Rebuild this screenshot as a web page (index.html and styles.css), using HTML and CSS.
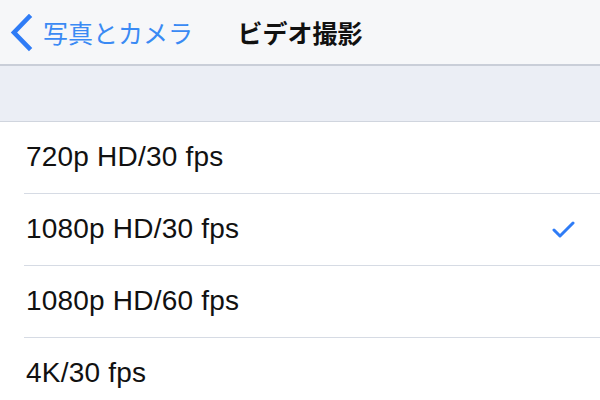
FILE: index.html
```html
<!DOCTYPE html>
<html lang="ja">
<head>
<meta charset="utf-8">
<link rel="stylesheet" href="styles.css">
</head>
<body>
<div class="screen">
  <header class="nav">
    <div class="back">
      <svg class="chev" width="24" height="38" viewBox="0 0 24 38"><path d="M19 3 L4 18.5 L19 34" fill="none" stroke="#2f7cf6" stroke-width="4.6" stroke-linecap="square" stroke-linejoin="miter"/></svg>
      <span class="back-label">写真とカメラ</span>
    </div>
    <div class="title">ビデオ撮影</div>
    <div></div>
  </header>
  <div class="band"></div>
  <ul class="list">
    <li class="row"><span class="label">720p HD/30 fps</span></li>
    <li class="row"><span class="label">1080p HD/30 fps</span>
      <svg class="check" width="24" height="20" viewBox="0 0 24 20"><path d="M3 10 L9 16 L22 3" fill="none" stroke="#2f7cf6" stroke-width="3" stroke-linecap="round" stroke-linejoin="round"/></svg>
    </li>
    <li class="row"><span class="label">1080p HD/60 fps</span></li>
    <li class="row"><span class="label">4K/30 fps</span></li>
  </ul>
</div>
</body>
</html>
```
FILE: styles.css
```css
html, body {
  margin: 0;
  padding: 0;
  background: #ffffff;
}
.screen {
  width: 600px;
  height: 400px;
  overflow: hidden;
  font-family: "Liberation Sans", "Noto Sans CJK JP", sans-serif;
}
.nav {
  height: 64px;
  background: #f6f7f9;
  border-bottom: 2px solid #c9ced8;
  display: grid;
  grid-template-columns: 1fr auto 1fr;
  align-items: center;
}
.back {
  display: flex;
  align-items: center;
  padding-left: 10px;
  gap: 9px;
}
.chev {
  display: block;
  margin-top: 1px;
}
.back-label {
  font-family: "Noto Sans CJK JP", sans-serif;
  font-size: 25px;
  color: #3a8af4;
  line-height: 1;
}
.title {
  font-family: "Noto Sans CJK JP", sans-serif;
  font-size: 25px;
  font-weight: 700;
  color: #111111;
  line-height: 1;
}
.band {
  height: 55px;
  background: #ebeef5;
  border-bottom: 1px solid #d0d5de;
}
.list {
  list-style: none;
  margin: 0;
  padding: 0 0 0 24px;
}
.row {
  height: 71px;
  border-bottom: 1px solid #d6dbe4;
  display: flex;
  align-items: center;
  justify-content: space-between;
  padding-right: 25px;
}
.row:last-child {
  border-bottom: none;
}
.label {
  font-size: 28px;
  color: #111111;
  letter-spacing: 0.2px;
  padding-left: 2px;
  padding-bottom: 1px;
}
.check {
  display: block;
}
```
